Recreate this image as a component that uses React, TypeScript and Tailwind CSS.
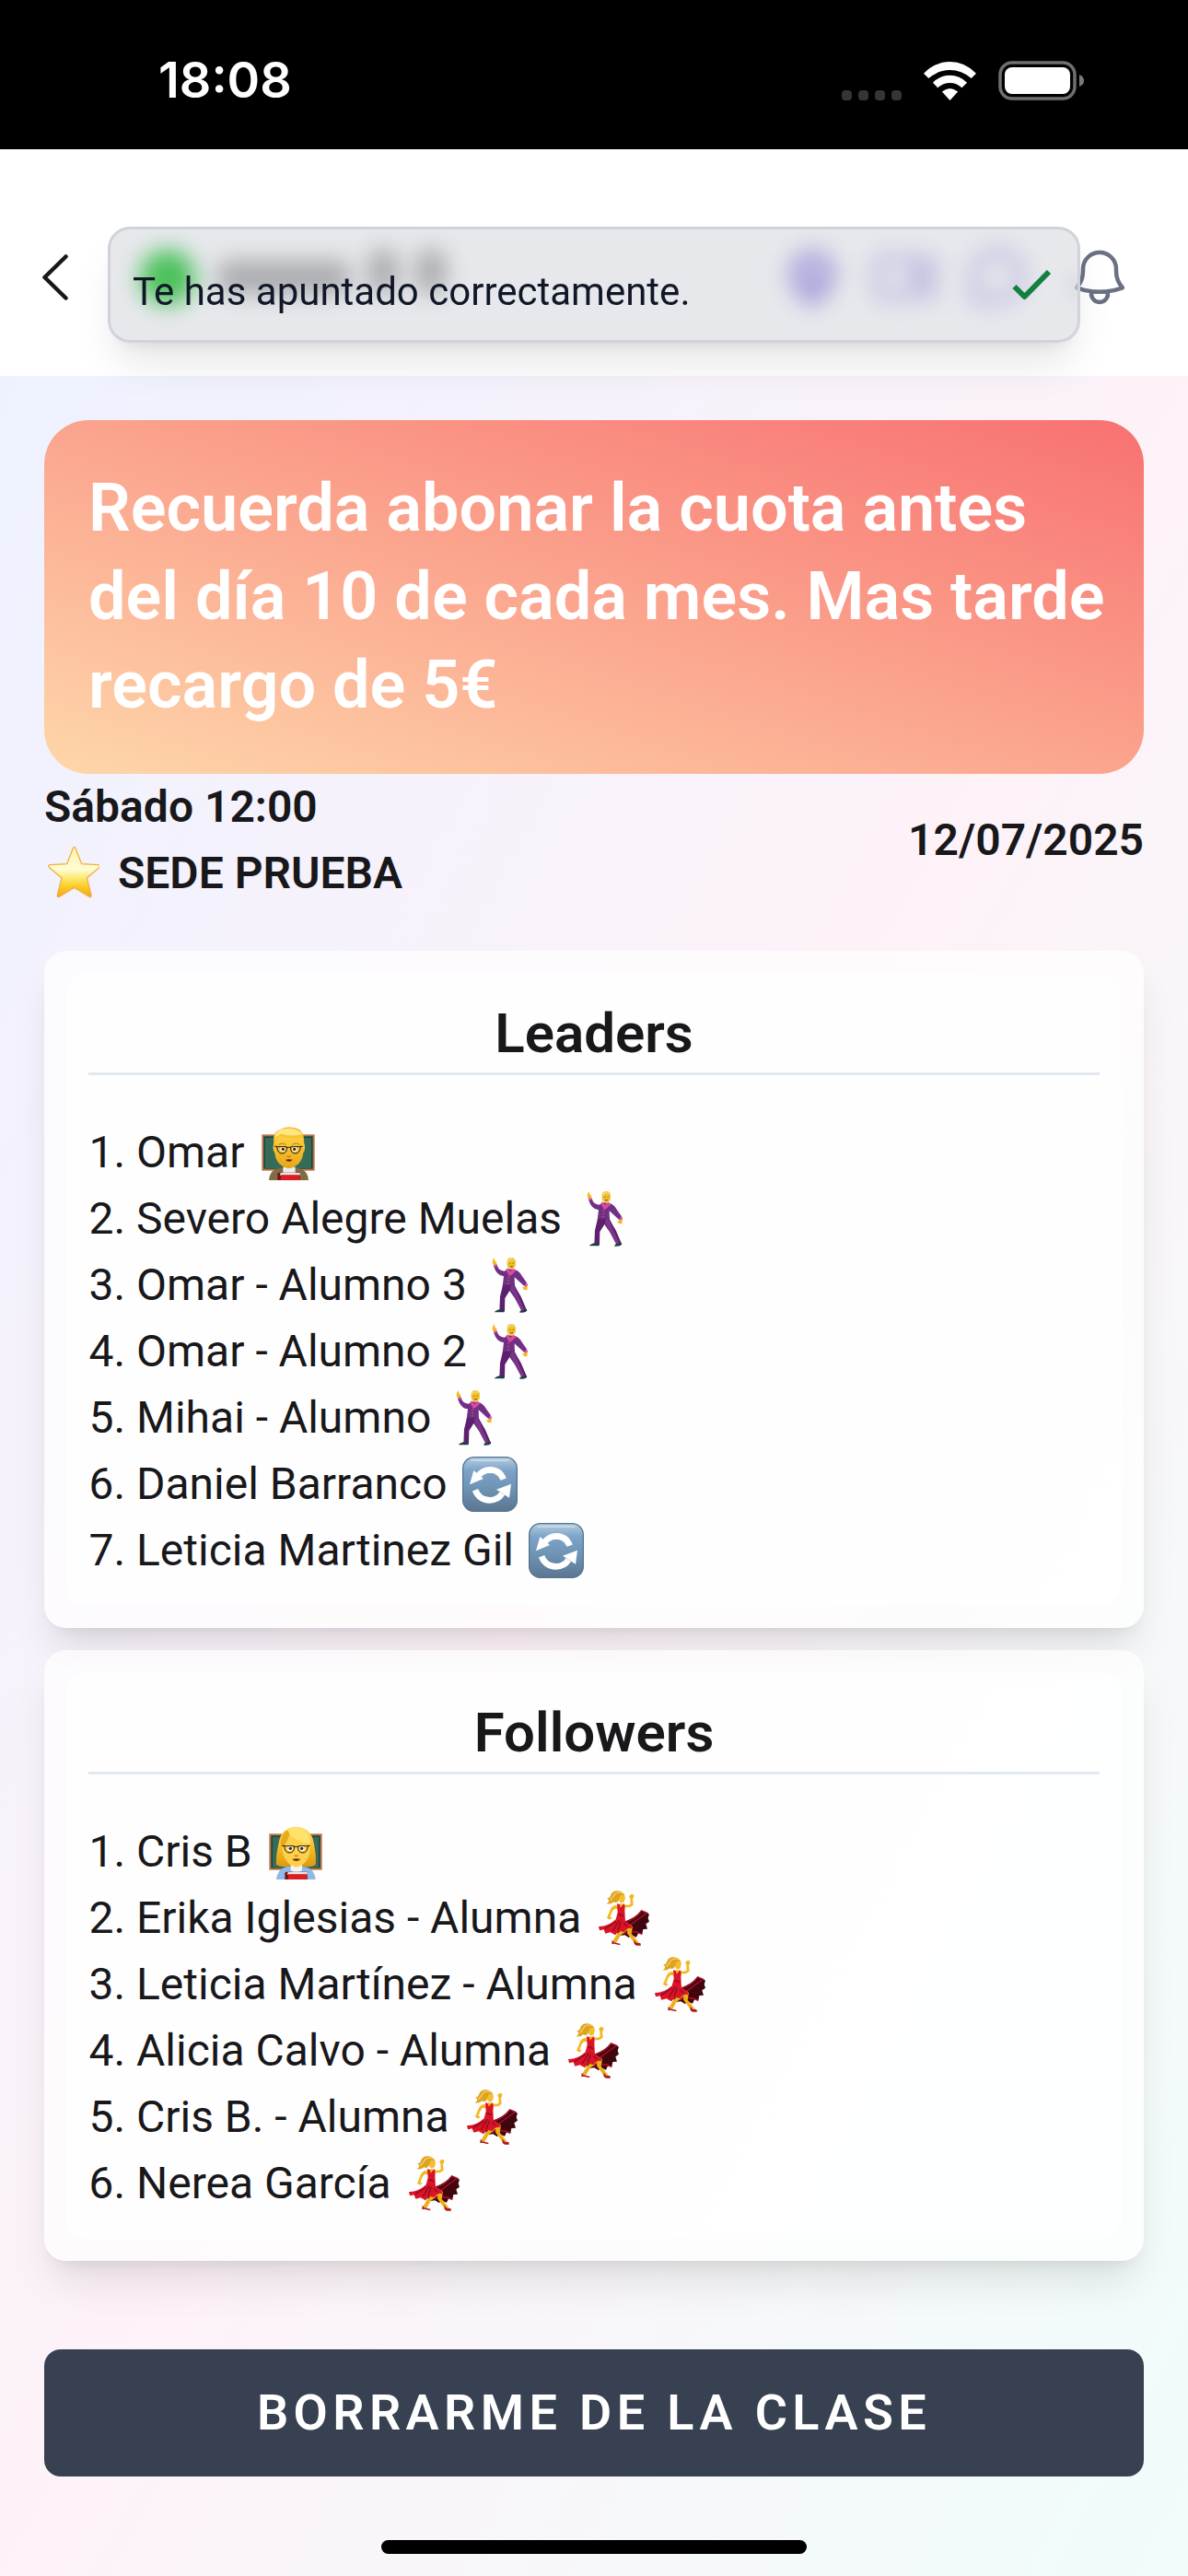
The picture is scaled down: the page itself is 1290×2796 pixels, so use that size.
import type { ReactNode } from 'react';
import { HiOutlineBell, HiMapPin, HiOutlineVideoCamera } from 'react-icons/hi2';

type Badge = 'teacherMan' | 'teacherWoman' | 'danceMan' | 'danceWoman' | 'repeat';

type Member = {
  name: string;
  badge: Badge;
};

const leaders: Member[] = [
  { name: 'Omar', badge: 'teacherMan' },
  { name: 'Severo Alegre Muelas', badge: 'danceMan' },
  { name: 'Omar - Alumno 3', badge: 'danceMan' },
  { name: 'Omar - Alumno 2', badge: 'danceMan' },
  { name: 'Mihai - Alumno', badge: 'danceMan' },
  { name: 'Daniel Barranco', badge: 'repeat' },
  { name: 'Leticia Martinez Gil', badge: 'repeat' },
];

const followers: Member[] = [
  { name: 'Cris B', badge: 'teacherWoman' },
  { name: 'Erika Iglesias - Alumna', badge: 'danceWoman' },
  { name: 'Leticia Martínez - Alumna', badge: 'danceWoman' },
  { name: 'Alicia Calvo - Alumna', badge: 'danceWoman' },
  { name: 'Cris B. - Alumna', badge: 'danceWoman' },
  { name: 'Nerea García', badge: 'danceWoman' },
];

export default function App() {
  return (
    <div className="flex min-h-screen flex-col bg-white font-['Roboto',sans-serif] text-zinc-900">
      <StatusBar />
      <Header />

      <div className="flex grow flex-col bg-linear-to-br/srgb from-[#eef2ff] via-[#fdf2f8] to-[#f0fdfa]">
        <main className="flex flex-col px-12 pt-12">
          <p className="rounded-[48px] bg-linear-to-tr/srgb from-[#fed7aa] to-[#f87171] py-12 pr-8 pl-12 text-[72px] leading-[96px] font-semibold text-white">
            Recuerda abonar la cuota antes del día 10 de cada mes. Mas tarde recargo de 5€
          </p>

          <div className="flex items-center justify-between text-5xl leading-[72px] font-semibold">
            <div>
              <p>Sábado 12:00</p>
              <p className="flex items-center gap-5">
                <Star />
                SEDE PRUEBA
              </p>
            </div>
            <time dateTime="2025-07-12">12/07/2025</time>
          </div>

          <div className="mt-12 flex flex-col gap-6">
            <MemberCard title="Leaders" members={leaders} />
            <MemberCard title="Followers" members={followers} />
          </div>

          <button
            type="button"
            className="mt-24 rounded-[18px] bg-[#374151] py-[33px] text-[54px] leading-[72px] font-semibold tracking-widest text-white uppercase"
          >
            Borrarme de la clase
          </button>
        </main>

        <div className="mx-auto mt-auto mb-6 h-[15px] w-[462px] rounded-full bg-black" />
      </div>
    </div>
  );
}

function StatusBar() {
  return (
    <div className="flex h-[162px] items-center justify-between bg-black pt-3 pr-28 pl-43 text-white">
      <span className="font-['Inter',sans-serif] text-[54px] leading-none font-semibold">18:08</span>
      <div className="flex items-end gap-6">
        <div className="flex gap-[7px]">
          {[0, 1, 2, 3].map((dot) => (
            <span key={dot} className="size-[11px] rounded-[4px] bg-[#353535]" />
          ))}
        </div>
        <svg viewBox="0 0 172 126" className="h-[42px] w-[57px]" fill="currentColor" aria-hidden="true">
          <path d="M0 38 Q38 0 86 0 T172 38 L156 54 Q124 27 86 27 T16 54Z" />
          <path d="M30 68 Q54 44 86 44 T142 68 L125 85 Q108 69 86 69 T46 85Z" />
          <path d="M60 98 Q86 76 112 98 L86 126Z" />
        </svg>
        <svg viewBox="0 0 94 43" className="h-[43px] w-[94px]" aria-hidden="true">
          <rect x="2" y="2" width="81" height="39" rx="13" fill="none" stroke="#6f6f6f" strokeWidth="3.5" />
          <rect x="7" y="7" width="71" height="29" rx="8" fill="#fff" />
          <path d="M88 15 Q93 17 93 21.500 T88 28Z" fill="#7a7a7a" />
        </svg>
      </div>
    </div>
  );
}

function Header() {
  return (
    <header className="relative z-10 flex h-[246px] items-center bg-white pt-8 pr-[60px] pl-9">
      <button type="button" aria-label="Volver" className="flex h-18 w-12 items-center justify-center">
        <svg viewBox="0 0 28 50" className="h-[50px] w-7" fill="none" aria-hidden="true">
          <path d="M25.500 2.500 L2.500 25 L25.500 47.500" stroke="#18181b" strokeWidth="4.500" strokeLinecap="round" strokeLinejoin="round" />
        </svg>
      </button>
      <div className="flex grow items-center pr-10 pl-17" aria-hidden="true">
        <span className="size-15 rounded-full bg-[#4fd45c]" />
        <span className="ml-6 flex items-end gap-5 pb-3">
          <span className="h-9 w-36 rounded-xl bg-[#bcbcbc]" />
          <span className="h-12 w-8 rounded-xl bg-[#bcbcbc]" />
          <span className="h-12 w-8 rounded-xl bg-[#bcbcbc]" />
        </span>
        <span className="ml-auto flex items-center gap-7 text-[#b3abec]">
          <HiMapPin className="size-18" />
          <HiOutlineVideoCamera className="size-18" strokeWidth={2} />
          <svg viewBox="0 0 24 24" className="size-18" fill="none" stroke="currentColor" strokeWidth="2">
            <path d="M4 20 V11.500 A8.500 8.500 0 1 1 12.500 20 Z" />
          </svg>
        </span>
      </div>
      <button type="button" aria-label="Notificaciones" className="text-gray-500">
        <HiOutlineBell className="size-18" />
      </button>
      <Toast>Te has apuntado correctamente.</Toast>
    </header>
  );
}

function Toast({ children }: { children: ReactNode }) {
  return (
    <div
      role="status"
      className="absolute inset-x-[117px] top-[84px] flex h-[126px] items-center justify-between rounded-3xl border-3 border-[#d1d3dc] bg-[#182048]/10 pr-7 pl-6 text-[42px] leading-[60px] text-gray-900 shadow-[0_30px_45px_-9px_rgba(0,0,0,0.1),0_12px_18px_-12px_rgba(0,0,0,0.1)] backdrop-blur-md"
    >
      <p className="pt-4">{children}</p>
      <svg viewBox="0 0 43 34" className="h-[34px] w-[43px]" fill="none" aria-hidden="true">
        <path d="M2.500 19 L13.500 30 L40 3" stroke="#15803d" strokeWidth="6" strokeLinejoin="round" />
      </svg>
    </div>
  );
}

function MemberCard({ title, members }: { title: string; members: Member[] }) {
  return (
    <section className="rounded-3xl bg-white/70 p-6 shadow-[0_30px_45px_-9px_rgba(0,0,0,0.1),0_12px_18px_-12px_rgba(0,0,0,0.1)]">
      <div className="rounded-3xl bg-white/70 p-6">
        <h2 className="border-b-3 border-slate-200 text-center text-6xl leading-[84px] font-semibold">{title}</h2>
        <ol className="mt-12 list-decimal pl-13 text-5xl leading-[72px]">
          {members.map((member) => (
            <li key={member.name}>
              <span className="inline-flex h-[72px] items-center gap-4 align-top">
                {member.name}
                <MemberBadge badge={member.badge} />
              </span>
            </li>
          ))}
        </ol>
      </div>
    </section>
  );
}

function MemberBadge({ badge }: { badge: Badge }) {
  switch (badge) {
    case 'teacherMan':
      return <TeacherMan />;
    case 'teacherWoman':
      return <TeacherWoman />;
    case 'danceMan':
      return <DanceMan />;
    case 'danceWoman':
      return <DanceWoman />;
    default:
      return <Repeat />;
  }
}

function Picture({ label, children }: { label: string; children: ReactNode }) {
  return (
    <svg viewBox="0 0 180 180" className="size-15 shrink-0" role="img" aria-label={label}>
      {children}
    </svg>
  );
}

function Star() {
  return (
    <Picture label="Estrella">
      <defs>
        <linearGradient id="star" x1="0" y1="0" x2="0" y2="1">
          <stop offset="0" stopColor="#fff3b0" />
          <stop offset="0.45" stopColor="#fffcd2" />
          <stop offset="0.62" stopColor="#fdea72" />
          <stop offset="0.8" stopColor="#fccb23" />
          <stop offset="1" stopColor="#f0a91c" />
        </linearGradient>
      </defs>
      <path
        d="M94 8 Q98 0 102 8 L122 59 L176 62 Q186 64 179 71 L139 105 L153 160 Q154 170 145 165 L98 136 L51 165 Q42 170 43 160 L57 105 L17 71 Q10 64 20 62 L74 59Z"
        fill="url(#star)"
        stroke="#f0b040"
        strokeWidth="4"
      />
    </Picture>
  );
}

function Chalkboard() {
  return (
    <>
      <rect x="7" y="31" width="172" height="118" fill="#b9764a" />
      <rect x="13" y="37" width="160" height="106" fill="#1f4439" />
      <rect x="18" y="42" width="150" height="99" fill="#356b59" />
    </>
  );
}

function Glasses() {
  return (
    <>
      <g fill="#fff">
        <circle cx="75" cy="79" r="8" />
        <circle cx="114" cy="79" r="8" />
      </g>
      <g fill="#3b2308">
        <circle cx="76" cy="79" r="5" />
        <circle cx="113" cy="79" r="5" />
      </g>
      <g fill="none" stroke="#1d1b19" strokeWidth="3">
        <path d="M56 71 H88 Q90 93 73 93 Q58 93 56 71Z" />
        <path d="M101 71 H133 Q131 93 116 93 Q99 93 101 71Z" />
        <path d="M88 75 Q95 70 101 75 M49 70 H57 M132 70 H140" />
      </g>
      <path d="M89 101 Q95 106 101 101" fill="none" stroke="#c27c0c" strokeWidth="4" />
    </>
  );
}

function Book() {
  return (
    <>
      <path d="M58 180 V160 Q58 155 64 155 H131 V180Z" fill="#791119" />
      <path d="M68 156 H131 V164 H66Z" fill="#eee3e3" />
      <path d="M70 163 H129 V180 H68Z" fill="#d91f22" />
    </>
  );
}

function TeacherMan() {
  return (
    <Picture label="Profesor">
      <defs>
        <linearGradient id="face-man" x1="0" y1="0" x2="0" y2="1">
          <stop offset="0" stopColor="#ffd747" />
          <stop offset="1" stopColor="#e9a416" />
        </linearGradient>
      </defs>
      <Chalkboard />
      <path d="M30 180 Q32 144 68 140 H121 Q157 144 159 180Z" fill="#806d43" />
      <path d="M76 137 H116 V158 H76Z" fill="#e9eef4" />
      <path d="M47 58 Q49 24 95 24 T144 58 Q152 77 142 91 Q137 134 95 142 Q53 134 49 91 Q39 77 47 58Z" fill="url(#face-man)" />
      <path d="M47 66 Q39 22 66 15 Q84 3 113 9 Q149 14 144 66 Q139 58 137 43 Q95 46 68 36 Q54 43 52 64Z" fill="#f8c232" />
      <path d="M51 43 Q48 16 80 13 Q116 7 139 29 Q108 40 71 29 Q57 34 51 43Z" fill="#ffe785" />
      <path d="M62 64 Q73 56 85 64 M106 64 Q118 56 130 64" fill="none" stroke="#b87a14" strokeWidth="3" />
      <Glasses />
      <path d="M84 113 Q95 110 107 113 Q103 119 95 119 Q88 119 84 113Z" fill="#5b260b" />
      <Book />
    </Picture>
  );
}

function TeacherWoman() {
  return (
    <Picture label="Profesora">
      <defs>
        <linearGradient id="hair-woman" x1="0" y1="0" x2="0" y2="1">
          <stop offset="0" stopColor="#ffe36b" />
          <stop offset="0.5" stopColor="#f7bd28" />
          <stop offset="1" stopColor="#dc990f" />
        </linearGradient>
      </defs>
      <Chalkboard />
      <path d="M30 180 Q34 143 68 138 H121 Q154 143 158 180Z" fill="#8fb9e9" />
      <path d="M30 132 Q28 105 37 65 Q45 8 96 8 Q145 10 153 65 Q161 105 158 132 Q142 143 120 137 H70 Q48 143 30 132Z" fill="url(#hair-woman)" />
      <path d="M77 130 H114 V151 Q96 164 77 151Z" fill="#f4f4f6" />
      <path d="M49 75 Q60 48 77 36 Q106 49 139 66 Q145 128 95 140 Q51 128 49 75Z" fill="#ffd04a" />
      <path d="M49 75 Q64 65 72 36 Q76 24 64 20 Q41 33 45 73Z" fill="#e8aa1a" />
      <path d="M70 24 Q78 50 142 66 Q140 21 101 12 Q80 10 70 24Z" fill="#ffe16e" />
      <Glasses />
      <path d="M82 114 Q95 109 109 114 Q104 120 95 120 Q87 120 82 114Z" fill="#7a2b14" />
      <Book />
    </Picture>
  );
}

function DanceMan() {
  return (
    <Picture label="Bailarín">
      <path d="M36 8 L41 1 L44 12 L49 14 L48 24 L40 27 L35 19Z" fill="#f6b91d" />
      <path d="M39 27 L50 23 Q54 42 74 44 L86 37 L109 39 Q124 45 132 61 L147 82 L140 94 L116 72 L107 64 L108 94 H68 L72 61 Q49 60 39 27Z" fill="#723085" />
      <path d="M39 25 L49 21 L51 28 L41 31Z M138 91 L148 83 L151 90 L142 97Z" fill="#d650b0" />
      <path d="M139 96 L150 91 L148 106 L138 105 L132 97Z" fill="#f6b91d" />
      <path d="M84 34 L93 45 L104 35 L112 43 L96 58 L90 60 L79 40Z" fill="#dc4a9c" />
      <path d="M83 12 Q85 0 97 0 Q111 2 111 15 L110 27 Q105 38 96 37 Q86 36 83 26Z" fill="#f2bd2d" />
      <path d="M83 13 Q83 0 98 0 Q109 1 110 11 Q97 4 87 15Z" fill="#ebd55d" />
      <path d="M91 19 H94 M101 19 H104 M93 29 H102" stroke="#7b4e10" strokeWidth="3" />
      <path d="M69 89 H107 Q117 109 128 127 L147 171 L132 177 L108 132 L91 108 L76 132 L75 174 L58 175 L60 127Z" fill="#5d206e" />
      <path d="M95 91 L105 90 Q119 124 139 170 L132 175 Q115 139 93 105Z" fill="#7a3689" />
      <path d="M88 62 L86 92" stroke="#e49b39" strokeWidth="3" strokeDasharray="3 7" />
      <path d="M57 169 H74 V178 H42 Q43 173 57 169Z M132 171 L146 168 L148 173 Q142 181 124 179 L125 173Z" fill="#213d47" />
    </Picture>
  );
}

function DanceWoman() {
  return (
    <Picture label="Bailarina">
      <path d="M92 101 Q125 91 149 66 Q161 70 174 77 L170 89 L174 101 L163 109 L168 125 L154 126 L151 142 L139 137 L132 152 L118 146 L107 153 L94 145 L72 148 L67 119Z" fill="#40060e" />
      <path d="M97 102 Q128 94 149 66 L166 73 Q137 92 112 113 M88 139 Q127 127 151 142" fill="none" stroke="#a30d27" strokeWidth="5" />
      <path d="M68 48 Q55 47 48 60 L42 75 L36 89 L46 95 L53 88 L46 86 L53 68 L60 60 L73 60Z" fill="#f3b61d" />
      <path d="M91 44 Q104 50 113 44 L112 24 L108 20 L114 12 L123 13 L124 22 L120 27 L122 47 Q110 58 93 54Z" fill="#f3b61d" />
      <path d="M94 111 Q112 105 120 118 L116 140 L141 171 L130 177 L103 141 L102 129 L80 147 L66 171 L55 165 L67 145 L91 118Z" fill="#eeb019" />
      <path d="M69 42 Q82 50 92 43 Q97 54 94 67 L96 101 Q113 105 120 123 Q102 119 92 135 L75 131 L63 145 L47 136 L31 140 L26 127 L12 130 L9 117 Q39 118 65 94 L71 71Z" fill="#db1327" />
      <path d="M73 76 L90 83 M76 97 L55 132 M82 102 L72 128 M65 102 L29 125 M91 106 L102 118" stroke="#860d1e" strokeWidth="4" />
      <path d="M77 42 L80 56 L90 44Z" fill="#f3b61d" />
      <path d="M74 15 Q82 5 93 12 L96 24 L92 37 Q84 44 76 36Z" fill="#f7bd31" />
      <path d="M92 14 Q85 0 66 1 Q50 5 48 17 Q45 24 36 26 Q44 29 42 36 Q40 41 34 43 Q50 46 58 37 Q68 42 74 32 L80 16Z" fill="#dda322" />
      <path d="M88 8 Q74 3 63 10 Q56 22 46 32" fill="none" stroke="#f3cb52" strokeWidth="5" />
      <path d="M53 161 L60 169 L79 173 V178 L58 173 L52 175Z M124 161 L133 171 L145 171 L147 179 H132 L125 174Z" fill="#ac1722" />
    </Picture>
  );
}

function Repeat() {
  return (
    <Picture label="Recuperación">
      <defs>
        <linearGradient id="repeat" x1="0" y1="0" x2="0" y2="1">
          <stop offset="0" stopColor="#b5cde0" />
          <stop offset="0.25" stopColor="#7ca3c8" />
          <stop offset="0.6" stopColor="#6c92b3" />
          <stop offset="1" stopColor="#5b7690" />
        </linearGradient>
      </defs>
      <rect x="2" y="2" width="176" height="176" rx="36" fill="url(#repeat)" stroke="#557592" strokeWidth="4" />
      <path d="M31 12 H149" stroke="#dbe7f0" strokeWidth="6" strokeLinecap="round" opacity="0.6" />
      <g fill="none" stroke="#fff" strokeWidth="20">
        <path d="M50 65 Q66 43 91 43 Q123 44 134 74" />
        <path d="M42 109 Q55 142 89 142 Q116 142 130 120" />
      </g>
      <path d="M37 45 L24 91 L69 72Z M159 89 L111 107 L153 134Z" fill="#fff" />
    </Picture>
  );
}
